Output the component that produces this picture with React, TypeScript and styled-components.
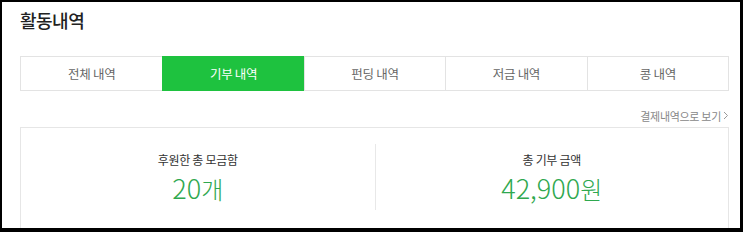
import React from "react";
import styled, { createGlobalStyle } from "styled-components";

const Global = createGlobalStyle`
  html, body { margin: 0; padding: 0; background: #fff; }
  body { font-family: "Noto Sans CJK KR", "Noto Sans", sans-serif; }
  * { box-sizing: border-box; }
`;

const Frame = styled.div`
  width: 743px;
  height: 232px;
  border-style: solid;
  border-color: #000;
  border-width: 2px 3px 4px 2px;
  background: #fff;
  overflow: hidden;
  padding: 0 11px 0 18px;
`;

const Title = styled.h2`
  margin: 0;
  padding-top: 5px;
  height: 54px;
  font-size: 18px;
  font-weight: 500;
  line-height: 26px;
  color: #222;
  letter-spacing: -0.5px;
`;

const Tabs = styled.div`
  display: grid;
  grid-template-columns: repeat(5, 1fr);
  border: 1px solid #e3e3e3;
  height: 35px;
`;

const Tab = styled.div<{ $active?: boolean }>`
  display: flex;
  align-items: center;
  justify-content: center;
  font-size: 12.5px;
  color: ${(p) => (p.$active ? "#fff" : "#666")};
  background: ${(p) => (p.$active ? "#1ec23f" : "#fff")};
  border-left: 1px solid ${(p) => (p.$active ? "#1ec23f" : "#e3e3e3")};
  margin: ${(p) => (p.$active ? "-1px 0" : "0")};
  &:first-child { border-left: none; }
  letter-spacing: -0.3px;
`;

const LinkRow = styled.div`
  display: flex;
  justify-content: flex-end;
  height: 36px;
  padding-top: 13px;
`;

const MoreLink = styled.a`
  font-size: 11px;
  color: #888;
  line-height: 16px;
  text-decoration: none;
  display: flex;
  align-items: center;
  gap: 2px;
  letter-spacing: -0.3px;
`;

const Summary = styled.div`
  border: 1px solid #e6e6e6;
  border-bottom: none;
  height: 110px;
  display: grid;
  grid-template-columns: 1fr 1fr;
  padding: 16px 0 0;
`;

const Stat = styled.div<{ $divider?: boolean }>`
  display: flex;
  flex-direction: column;
  align-items: center;
  height: 66px;
  border-left: ${(p) => (p.$divider ? "1px solid #e8e8e8" : "none")};
`;

const Label = styled.div`
  font-size: 12px;
  color: #333;
  line-height: 16px;
  margin-top: 8px;
  letter-spacing: -0.3px;
`;

const Value = styled.div`
  font-size: 27px;
  font-weight: 300;
  color: #2fa84f;
  line-height: 32px;
  margin-top: 4px;
  font-family: "Noto Sans CJK KR", "Noto Sans", sans-serif;
`;

const Unit = styled.span`
  font-size: 24px;
  font-weight: 300;
`;

const tabs = ["전체 내역", "기부 내역", "펀딩 내역", "저금 내역", "콩 내역"];

export default function App() {
  return (
    <>
      <Global />
      <Frame>
        <Title>활동내역</Title>
        <Tabs>
          {tabs.map((t, i) => (
            <Tab key={t} $active={i === 1}>
              {t}
            </Tab>
          ))}
        </Tabs>
        <LinkRow>
          <MoreLink href="#">
            결제내역으로 보기
            <svg width="6" height="9" viewBox="0 0 6 9" fill="none">
              <path d="M1 1l3.5 3.5L1 8" stroke="#999" strokeWidth="1" />
            </svg>
          </MoreLink>
        </LinkRow>
        <Summary>
          <Stat>
            <Label>후원한 총 모금함</Label>
            <Value>
              20<Unit>개</Unit>
            </Value>
          </Stat>
          <Stat $divider>
            <Label>총 기부 금액</Label>
            <Value>
              42,900<Unit>원</Unit>
            </Value>
          </Stat>
        </Summary>
      </Frame>
    </>
  );
}
